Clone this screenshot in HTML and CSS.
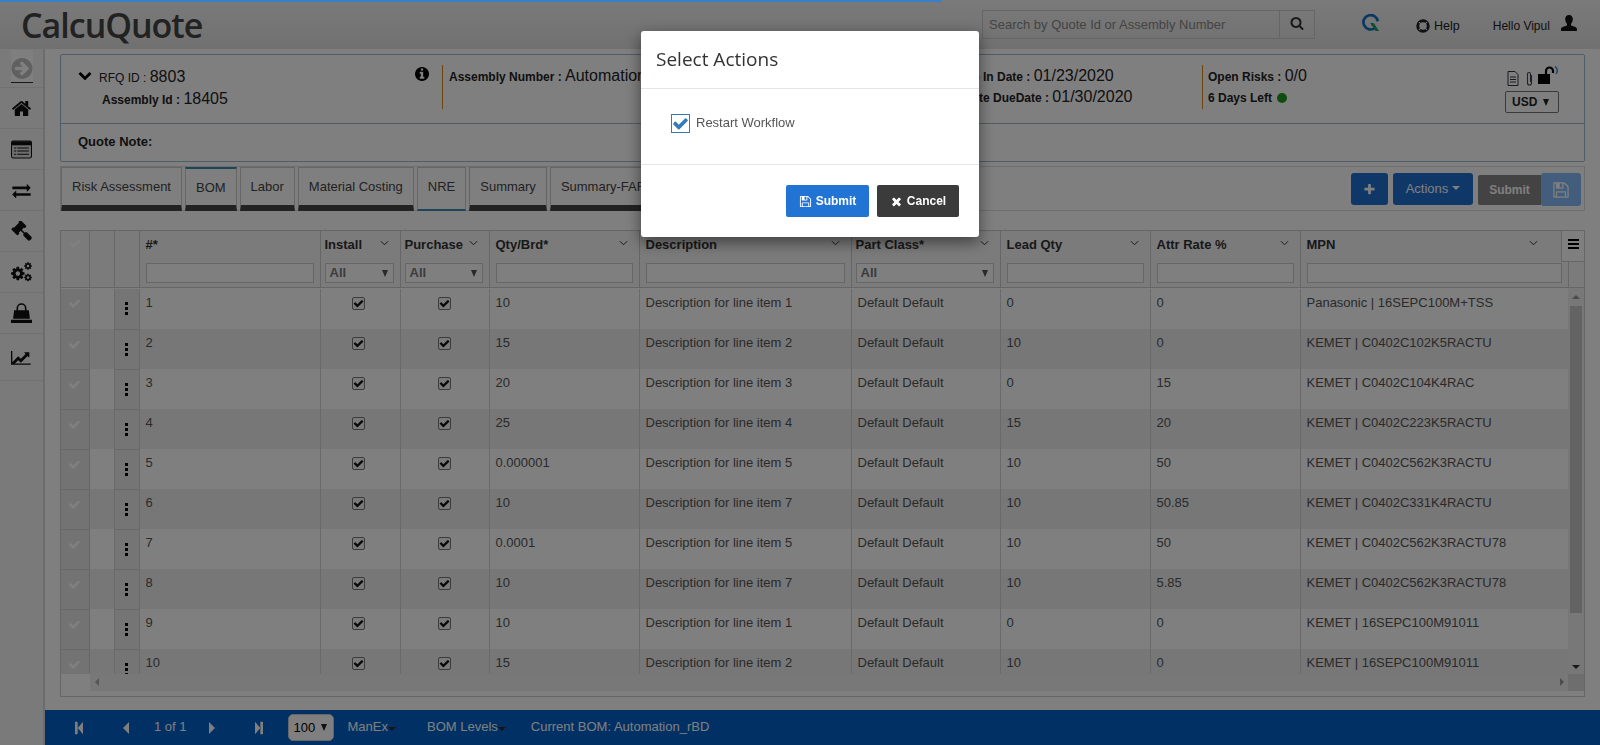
FILE: index.html
```html
<!DOCTYPE html>
<html>
<head>
    <title>CalcuQuote</title>
    <link rel="stylesheet" href="styles.css">
</head>
<body>
    <svg class="sprites" xmlns="http://www.w3.org/2000/svg">
        <symbol id="i-check" viewBox="0 0 1792 1792"><path d="M1671 566q0 40-28 68l-724 724-136 136q-28 28-68 28t-68-28l-136-136-362-362q-28-28-28-68t28-68l136-136q28-28 68-28t68 28l294 295 656-657q28-28 68-28t68 28l136 136q28 28 28 68z"/></symbol>
        <symbol id="i-times" viewBox="0 0 1792 1792"><path d="M1490 1322q0 40-28 68l-136 136q-28 28-68 28t-68-28l-294-294-294 294q-28 28-68 28t-68-28l-136-136q-28-28-28-68t28-68l294-294-294-294q-28-28-28-68t28-68l136-136q28-28 68-28t68 28l294 294 294-294q28-28 68-28t68 28l136 136q28 28 28 68t-28 68l-294 294 294 294q28 28 28 68z"/></symbol>
        <symbol id="i-save" viewBox="0 0 1792 1792"><path d="M512 1536h768v-384h-768v384zm896 0h128v-896q0-14-10-38.5t-20-34.5l-281-281q-10-10-34-20t-39-10v416q0 40-28 68t-68 28h-576q-40 0-68-28t-28-68v-416h-128v1280h128v-416q0-40 28-68t68-28h832q40 0 68 28t28 68v416zm-384-928v-320q0-13-9.5-22.5t-22.5-9.5h-192q-13 0-22.5 9.5t-9.5 22.5v320q0 13 9.5 22.5t22.5 9.5h192q13 0 22.5-9.5t9.5-22.5zm640 32v928q0 40-28 68t-68 28h-1344q-40 0-68-28t-28-68v-1344q0-40 28-68t68-28h928q40 0 88 20t76 48l280 280q28 28 48 76t20 88z"/></symbol>
        <symbol id="i-cog" viewBox="0 0 1792 1792"><path d="M1152 896q0-106-75-181t-181-75-181 75-75 181 75 181 181 75 181-75 75-181zm512-109v222q0 12-8 23t-20 13l-185 28q-19 54-39 91 35 50 107 138 10 12 10 25t-9 23q-27 37-99 108t-94 71q-12 0-26-9l-138-108q-44 23-91 38-16 136-29 186-7 28-36 28h-222q-14 0-24.5-8.5t-11.5-21.5l-28-184q-49-16-90-37l-141 107q-10 9-25 9-14 0-25-11-126-114-165-168-7-10-7-23 0-12 8-23 15-21 51-66.5t54-70.5q-27-50-41-99l-183-27q-13-2-21-12.5t-8-23.5v-222q0-12 8-23t19-13l186-28q14-46 39-92-40-57-107-138-10-12-10-24 0-10 9-23 26-36 98.5-107.5t94.5-71.5q13 0 26 10l138 107q44-23 91-38 16-136 29-186 7-28 36-28h222q14 0 24.5 8.5t11.5 21.5l28 184q49 16 90 37l142-107q9-9 24-9 13 0 25 10 129 119 165 170 7 8 7 22 0 12-8 23-15 21-51 66.5t-54 70.5q26 50 41 98l183 28q13 2 21 12.5t8 23.5z"/></symbol>
        <symbol id="i-angle" viewBox="0 0 10 6"><path d="M1 1l4 4 4-4" fill="none" stroke="currentColor" stroke-width="1.1"/></symbol>
        <symbol id="i-dots" viewBox="0 0 3 13"><rect width="3" height="3"/><rect y="5" width="3" height="3"/><rect y="10" width="3" height="3"/></symbol>
    </svg>

    <div class="pace-bar"></div>

    <header class="topbar">
        <div class="logo">CalcuQuote</div>
        <div class="search">
            <input type="text" placeholder="Search by Quote Id or Assembly Number">
            <button class="search-btn"><svg class="ico-14" viewBox="0 0 1792 1792"><path d="M1216 832q0-185-131.5-316.5t-316.5-131.5-316.5 131.5-131.5 316.5 131.5 316.5 316.5 131.5 316.5-131.5 131.5-316.5zm512 832q0 52-38 90t-90 38q-54 0-90-38l-343-342q-179 124-399 124-143 0-273.5-55.5t-225-150-150-225-55.5-273.5 55.5-273.5 150-225 225-150 273.5-55.5 273.5 55.5 225 150 150 225 55.5 273.5q0 220-124 399l343 343q37 37 37 90z"/></svg></button>
        </div>
        <svg class="q-logo" viewBox="0 0 20 20"><path d="M14.5 15.5A8 8 0 1 1 17.5 8" fill="none" stroke="#1670c4" stroke-width="3"/><path d="M9 10h4l6 9h-4z" fill="#1f9a7a"/></svg>
        <a class="help"><svg viewBox="0 0 16 16"><circle cx="8" cy="8" r="6" fill="none" stroke="#222" stroke-width="3.4"/><path d="M3.500 3.500l3 3M12.500 3.500l-3 3M3.500 12.500l3-3M12.500 12.500l-3-3" stroke="#eee" stroke-width="1.300"/></svg>Help</a>
        <span class="hello">Hello Vipul</span>
        <svg class="user" viewBox="0 0 16 16"><path d="M8 0c2.600 0 3.800 2 3.800 4.200 0 1.800-.8 3.600-1.800 4.600v1.600c2.400 1 6 1.400 6 3.400V16H0v-2.200c0-2 3.600-2.400 6-3.400V8.800C5 7.800 4.200 6 4.200 4.200 4.200 2 5.400 0 8 0z"/></svg>
    </header>

    <div class="main">
        <nav class="sidebar">
            <div class="side-first">
                <svg class="side-arrow" viewBox="0 128 1536 1536"><path d="M1285 896q0-27-18-45l-91-91-362-362q-18-18-45-18t-45 18l-91 91q-18 18-18 45t18 45l189 189h-502q-26 0-45 19t-19 45v128q0 26 19 45t45 19h502l-189 189q-19 19-19 45t19 45l91 91q18 18 45 18t45-18l362-362 91-91q18-18 18-45zm251 0q0 209-103 385.500t-279.500 279.500-385.500 103-385.500-103-279.500-279.500-103-385.500 103-385.500 279.500-279.500 385.500-103 385.500 103 279.500 279.500 103 385.500z"/></svg>
            </div>
            <div class="side-item"><svg class="side-ico" viewBox="0 0 1792 1792"><path d="M1472 992v480q0 26-19 45t-45 19h-384v-384h-256v384h-384q-26 0-45-19t-19-45v-480q0-1 .5-3t.5-3l575-474 575 474q1 2 1 6zm223-69l-62 74q-8 9-21 11h-3q-13 0-21-7l-692-577-692 577q-12 8-24 7-13-2-21-11l-62-74q-8-10-7-23.5t11-21.5l719-599q32-26 76-26t76 26l244 204v-195q0-14 9-23t23-9h192q14 0 23 9t9 23v408l219 182q10 8 11 21.5t-7 23.5z"/></svg></div>
            <div class="side-item"><svg class="side-ico" viewBox="0 0 20 17"><rect x=".5" y=".5" width="19" height="16" rx="1.500" fill="#ddd" stroke="#111"/><rect x="1" y="1" width="18" height="3.500" fill="#111"/><path d="M3 7h2M6 7h11M3 10h2M6 10h11M3 13h2M6 13h11" stroke="#111"/></svg></div>
            <div class="side-item"><svg class="side-ico" viewBox="0 0 2048 1792"><path transform="translate(128 0)" d="M1792 1184v192q0 13-9.500 22.500t-22.500 9.500h-1376v192q0 13-9.500 22.500t-22.500 9.500q-12 0-24-10l-319-320q-9-9-9-22 0-14 9-23l320-320q9-9 23-9 13 0 22.500 9.500t9.500 22.500v192h1376q13 0 22.500 9.500t9.500 22.500zm0-544q0 14-9 23l-320 320q-9 9-23 9-13 0-22.500-9.500t-9.500-22.500v-192h-1376q-13 0-22.500-9.500t-9.500-22.500v-192q0-13 9.500-22.500t22.500-9.500h1376v-192q0-14 9-23t23-9q12 0 24 10l319 319q9 9 9 23z"/></svg></div>
            <div class="side-item"><svg class="side-ico" viewBox="0 0 1792 1792"><path d="M1771 1440q0 53-37 90l-107 108q-39 37-91 37-53 0-90-37l-363-364q-38-36-38-90 0-53 43-96l-256-256-126 126q-14 14-34 14t-34-14q2 2 12.500 12t12.500 13 10 11.500 10 13.500 6 13.500 5.500 16.500 1.500 18q0 38-28 68-3 3-16.500 18t-19 20.500-18.500 16.500-22 15.500-22 9-26 4.500q-40 0-68-28l-408-408q-28-28-28-68 0-13 4.500-26t9-22 15.500-22 16.500-18.500 20.500-19 18-16.500q30-28 68-28 10 0 18 1.500t16.500 5.500 13.500 6 13.500 10 11.500 10 13 12.500 12 12.500q-14-14-14-34t14-34l348-348q14-14 34-14t34 14q-2-2-12.500-12t-12.500-13-10-11.500-10-13.500-6-13.500-5.500-16.500-1.500-18q0-38 28-68 3-3 16.500-18t19-20.500 18.500-16.500 22-15.500 22-9 26-4.500q40 0 68 28l408 408q28 28 28 68 0 13-4.500 26t-9 22-15.500 22-16.500 18.500-20.500 19-18 16.500q-30 28-68 28-10 0-18-1.500t-16.500-5.500-13.500-6-13.500-10-11.500-10-13-12.500-12-12.500q14 14 14 34t-14 34l-126 126 256 256q43-43 96-43 52 0 91 37l363 363q37 39 37 91z"/></svg></div>
            <div class="side-item"><svg class="side-ico side-cogs" viewBox="0 0 22 20"><use href="#i-cog" x="0" y="4" width="15" height="15"/><use href="#i-cog" x="13" y="0" width="8.500" height="8.500"/><use href="#i-cog" x="13" y="11" width="8.500" height="8.500"/></svg></div>
            <div class="side-item"><svg class="side-ico" viewBox="0 0 20 20"><path d="M6 8V5a4 4 0 0 1 8 0v3" fill="none" stroke="#111" stroke-width="1.500"/><path d="M3 7h14l1 8H2zM0 16h20v3H0z"/></svg></div>
            <div class="side-item side-chart"><svg class="side-ico" viewBox="0 0 2048 1792"><path d="M1920 1472v128h-1920v-1344h128v1216h1792zm-128-1056v435q0 21-19.500 29.500t-35.500-7.500l-121-121-633 633q-10 10-23 10t-23-10l-233-233-416 416-192-192 585-585q10-10 23-10t23 10l233 233 464-464-121-121q-16-16-7.500-35.500t29.500-19.500h435q14 0 23 9t9 23z"/></svg></div>
        </nav>

        <div class="content">
            <div class="content-body">
                <section class="info-panel">
                    <div class="info-top">
                        <div class="info-rfq">
                            <svg class="chevron" viewBox="0 0 1792 1792"><path d="M1683 808l-742 741q-19 19-45 19t-45-19l-742-741q-19-19-19-45.500t19-45.500l166-165q19-19 45-19t45 19l531 531 531-531q19-19 45-19t45 19l166 165q19 19 19 45.500t-19 45.500z"/></svg>
                            <div class="rfq-lines">
                                <div class="line rfq-line"><b>RFQ ID :</b> <span class="val">8803</span></div>
                                <div class="line asm-line"><b>Assembly Id :</b> <span class="val">18405</span></div>
                            </div>
                            <svg class="info-ico" viewBox="128 128 1536 1536"><path d="M1152 1376v-160q0-14-9-23t-23-9h-96v-512q0-14-9-23t-23-9h-320q-14 0-23 9t-9 23v160q0 14 9 23t23 9h96v320h-96q-14 0-23 9t-9 23v160q0 14 9 23t23 9h448q14 0 23-9t9-23zm-128-896v-160q0-14-9-23t-23-9h-192q-14 0-23 9t-9 23v160q0 14 9 23t23 9h192q14 0 23-9t9-23zm640 416q0 209-103 385.500t-279.500 279.500-385.500 103-385.500-103-279.500-279.500-103-385.500 103-385.500 279.500-279.500 385.500-103 385.500 103 279.500 279.500 103 385.500z"/></svg>
                        </div>
                        <div class="info-asm">
                            <div class="line"><b>Assembly Number :</b> <span class="val">Automation_rBD</span></div>
                        </div>
                        <div class="info-dates">
                            <div class="line date-in"><b>Quote In Date :</b> <span class="val">01/23/2020</span></div>
                            <div class="line date-due"><b>Quote DueDate :</b> <span class="val">01/30/2020</span></div>
                        </div>
                        <div class="info-risk">
                            <div class="line"><b>Open Risks :</b> <span class="val">0/0</span></div>
                            <div class="line"><b>6 Days Left</b> <i class="dot"></i></div>
                        </div>
                        <div class="info-tools">
                            <div class="tool-icons">
                                <svg class="doc" viewBox="0 0 12 15"><path d="M1 .5h7l3 3v11H1z" fill="none" stroke="#334" /><path d="M3 6h6M3 8.500h6M3 11h6" stroke="#334"/></svg>
                                <svg class="clip" viewBox="0 0 7 15"><path d="M5.500 4v8a2 2 0 0 1-4 0V3a1.500 1.500 0 0 1 3 0v8" fill="none" stroke="#445" stroke-width="1.100"/></svg>
                                <svg class="lock" viewBox="0 0 22 19"><rect y="8" width="12" height="10"/><path d="M8 8V5a3.500 3.500 0 0 1 7 0v2" fill="none" stroke="#000" stroke-width="2.200"/><path d="M17 .5a5 5 0 0 1 1 7.500" fill="none" stroke="#3b8fd9" stroke-width="1.500"/></svg>
                            </div>
                            <div class="usd">USD <span class="tri"></span></div>
                        </div>
                    </div>
                    <div class="info-note"><b>Quote Note:</b></div>
                </section>

                <section class="tabs">
                    <a class="tab">Risk Assessment</a>
                    <a class="tab tab-bom">BOM</a>
                    <a class="tab">Labor</a>
                    <a class="tab">Material Costing</a>
                    <a class="tab tab-nre">NRE</a>
                    <a class="tab">Summary</a>
                    <a class="tab">Summary-FAR</a>
                    <div class="tab-actions">
                        <button class="btn btn-blue btn-plus"><svg class="ico-13" viewBox="0 0 1792 1792"><path d="M1600 736v192q0 40-28 68t-68 28h-416v416q0 40-28 68t-68 28h-192q-40 0-68-28t-28-68v-416h-416q-40 0-68-28t-28-68v-192q0-40 28-68t68-28h416v-416q0-40 28-68t68-28h192q40 0 68 28t28 68v416h416q40 0 68 28t28 68z"/></svg></button>
                        <button class="btn btn-blue btn-actions">Actions <span class="caret"></span></button>
                        <button class="btn btn-gray">Submit</button>
                        <button class="btn btn-save"><svg class="ico-18"><use href="#i-save"/></svg></button>
                    </div>
                </section>

                <section class="grid">
                    <div class="grid-menu"><span></span><span></span><span></span></div>
                    <div class="grid-head-wrap">
                        <table class="grid-head">
                            <colgroup><col class="c1"><col class="c2"><col class="c3"><col class="c4"><col class="c5"><col class="c6"><col class="c7"><col class="c8"><col class="c9"><col class="c10"><col class="c11"><col class="c12"></colgroup>
                            <tr>
                                <th class="sel"><svg class="tick"><use href="#i-check"/></svg></th>
                                <th></th>
                                <th></th>
                                <th><div class="th-title">#*</div><input type="text"></th>
                                <th class="th-tight"><div class="th-title">Install<svg class="angle"><use href="#i-angle"/></svg></div><div class="fsel">All<span class="tri"></span></div></th>
                                <th class="th-tight"><div class="th-title">Purchase<svg class="angle"><use href="#i-angle"/></svg></div><div class="fsel">All<span class="tri"></span></div></th>
                                <th><div class="th-title">Qty/Brd*<svg class="angle"><use href="#i-angle"/></svg></div><input type="text"></th>
                                <th><div class="th-title">Description<svg class="angle"><use href="#i-angle"/></svg></div><input type="text"></th>
                                <th class="th-tight"><div class="th-title">Part Class*<svg class="angle"><use href="#i-angle"/></svg></div><div class="fsel">All<span class="tri"></span></div></th>
                                <th><div class="th-title">Lead Qty<svg class="angle"><use href="#i-angle"/></svg></div><input type="text"></th>
                                <th><div class="th-title">Attr Rate %<svg class="angle"><use href="#i-angle"/></svg></div><input type="text"></th>
                                <th class="th-mpn"><div class="th-title">MPN<svg class="angle"><use href="#i-angle"/></svg></div><input type="text"></th>
                            </tr>
                        </table>
                    </div>
                    <div class="grid-body">
                        <div class="grid-rows">
                            <table class="rows">
                                <colgroup><col class="c1"><col class="c2"><col class="c3"><col class="c4"><col class="c5"><col class="c6"><col class="c7"><col class="c8"><col class="c9"><col class="c10"><col class="c11"><col class="c12"></colgroup>
                                <tr><td class="sel"><svg class="tick"><use href="#i-check"/></svg></td><td></td><td class="menu"><svg class="dots"><use href="#i-dots"/></svg></td><td>1</td><td class="ctr"><span class="cb"><svg><use href="#i-check"/></svg></span></td><td class="ctr"><span class="cb"><svg><use href="#i-check"/></svg></span></td><td>10</td><td>Description for line item 1</td><td>Default Default</td><td>0</td><td>0</td><td>Panasonic | 16SEPC100M+TSS</td></tr>
                                <tr><td class="sel"><svg class="tick"><use href="#i-check"/></svg></td><td></td><td class="menu"><svg class="dots"><use href="#i-dots"/></svg></td><td>2</td><td class="ctr"><span class="cb"><svg><use href="#i-check"/></svg></span></td><td class="ctr"><span class="cb"><svg><use href="#i-check"/></svg></span></td><td>15</td><td>Description for line item 2</td><td>Default Default</td><td>10</td><td>0</td><td>KEMET | C0402C102K5RACTU</td></tr>
                                <tr><td class="sel"><svg class="tick"><use href="#i-check"/></svg></td><td></td><td class="menu"><svg class="dots"><use href="#i-dots"/></svg></td><td>3</td><td class="ctr"><span class="cb"><svg><use href="#i-check"/></svg></span></td><td class="ctr"><span class="cb"><svg><use href="#i-check"/></svg></span></td><td>20</td><td>Description for line item 3</td><td>Default Default</td><td>0</td><td>15</td><td>KEMET | C0402C104K4RAC</td></tr>
                                <tr><td class="sel"><svg class="tick"><use href="#i-check"/></svg></td><td></td><td class="menu"><svg class="dots"><use href="#i-dots"/></svg></td><td>4</td><td class="ctr"><span class="cb"><svg><use href="#i-check"/></svg></span></td><td class="ctr"><span class="cb"><svg><use href="#i-check"/></svg></span></td><td>25</td><td>Description for line item 4</td><td>Default Default</td><td>15</td><td>20</td><td>KEMET | C0402C223K5RACTU</td></tr>
                                <tr><td class="sel"><svg class="tick"><use href="#i-check"/></svg></td><td></td><td class="menu"><svg class="dots"><use href="#i-dots"/></svg></td><td>5</td><td class="ctr"><span class="cb"><svg><use href="#i-check"/></svg></span></td><td class="ctr"><span class="cb"><svg><use href="#i-check"/></svg></span></td><td>0.000001</td><td>Description for line item 5</td><td>Default Default</td><td>10</td><td>50</td><td>KEMET | C0402C562K3RACTU</td></tr>
                                <tr><td class="sel"><svg class="tick"><use href="#i-check"/></svg></td><td></td><td class="menu"><svg class="dots"><use href="#i-dots"/></svg></td><td>6</td><td class="ctr"><span class="cb"><svg><use href="#i-check"/></svg></span></td><td class="ctr"><span class="cb"><svg><use href="#i-check"/></svg></span></td><td>10</td><td>Description for line item 7</td><td>Default Default</td><td>10</td><td>50.85</td><td>KEMET | C0402C331K4RACTU</td></tr>
                                <tr><td class="sel"><svg class="tick"><use href="#i-check"/></svg></td><td></td><td class="menu"><svg class="dots"><use href="#i-dots"/></svg></td><td>7</td><td class="ctr"><span class="cb"><svg><use href="#i-check"/></svg></span></td><td class="ctr"><span class="cb"><svg><use href="#i-check"/></svg></span></td><td>0.0001</td><td>Description for line item 5</td><td>Default Default</td><td>10</td><td>50</td><td>KEMET | C0402C562K3RACTU78</td></tr>
                                <tr><td class="sel"><svg class="tick"><use href="#i-check"/></svg></td><td></td><td class="menu"><svg class="dots"><use href="#i-dots"/></svg></td><td>8</td><td class="ctr"><span class="cb"><svg><use href="#i-check"/></svg></span></td><td class="ctr"><span class="cb"><svg><use href="#i-check"/></svg></span></td><td>10</td><td>Description for line item 7</td><td>Default Default</td><td>10</td><td>5.85</td><td>KEMET | C0402C562K3RACTU78</td></tr>
                                <tr><td class="sel"><svg class="tick"><use href="#i-check"/></svg></td><td></td><td class="menu"><svg class="dots"><use href="#i-dots"/></svg></td><td>9</td><td class="ctr"><span class="cb"><svg><use href="#i-check"/></svg></span></td><td class="ctr"><span class="cb"><svg><use href="#i-check"/></svg></span></td><td>10</td><td>Description for line item 1</td><td>Default Default</td><td>0</td><td>0</td><td>KEMET | 16SEPC100M91011</td></tr>
                                <tr><td class="sel"><svg class="tick"><use href="#i-check"/></svg></td><td></td><td class="menu"><svg class="dots"><use href="#i-dots"/></svg></td><td>10</td><td class="ctr"><span class="cb"><svg><use href="#i-check"/></svg></span></td><td class="ctr"><span class="cb"><svg><use href="#i-check"/></svg></span></td><td>15</td><td>Description for line item 2</td><td>Default Default</td><td>10</td><td>0</td><td>KEMET | 16SEPC100M91011</td></tr>
                            </table>
                        </div>
                        <div class="vscroll">
                            <span class="arr arr-up"></span>
                            <div class="vthumb"></div>
                            <span class="arr arr-down"></span>
                        </div>
                    </div>
                    <div class="hscroll">
                        <div class="hscroll-pin"></div>
                        <div class="hscroll-track"><span class="arr arr-left"></span><span class="arr arr-right"></span></div>
                        <div class="hscroll-corner"></div>
                    </div>
                </section>
            </div>

            <footer class="pager">
                <svg class="pg pg-first" viewBox="0 0 9 14"><rect width="3" height="14"/><path d="M9 0v14L3 7z"/></svg>
                <svg class="pg pg-prev" viewBox="0 0 7 14"><path d="M7 0v14L0 7z"/></svg>
                <span class="pg-count">1 of 1</span>
                <svg class="pg pg-next" viewBox="0 0 7 14"><path d="M0 0v14l7-7z"/></svg>
                <svg class="pg pg-last" viewBox="0 0 9 14"><rect x="6" width="3" height="14"/><path d="M0 0v14l6-7z"/></svg>
                <div class="pg-size">100 <span class="tri"></span></div>
                <span class="pg-link pg-manex">ManEx<span class="caret"></span></span>
                <span class="pg-link pg-levels">BOM Levels<span class="caret"></span></span>
                <span class="pg-link">Current BOM: Automation_rBD</span>
            </footer>
        </div>
    </div>

    <div class="backdrop">
        <div class="modal">
            <div class="modal-head">Select Actions</div>
            <div class="modal-body">
                <span class="big-check"><svg><use href="#i-check"/></svg></span>
                <label>Restart Workflow</label>
            </div>
            <div class="modal-foot">
                <button class="mbtn mbtn-submit"><svg><use href="#i-save"/></svg>Submit</button>
                <button class="mbtn mbtn-cancel"><svg><use href="#i-times"/></svg>Cancel</button>
            </div>
        </div>
    </div>
</body>
</html>
```

FILE: styles.css
```css
* {
    box-sizing: border-box;
}
html, body {
    height: 100%;
}
body {
    margin: 0;
    height: 745px;
    overflow: hidden;
    font-family: "Liberation Sans", Arial, sans-serif;
    font-size: 12px;
    color: #222;
    background-color: #fff;
}
.sprites {
    display: none;
}
button, input {
    font-family: inherit;
}
.ico-13 { width: 13px; height: 13px; fill: currentColor; }
.ico-14 { width: 14px; height: 14px; fill: currentColor; }
.ico-18 { width: 18px; height: 18px; fill: currentColor; }

.pace-bar {
    position: fixed;
    top: 0;
    left: 0;
    width: 941px;
    height: 2px;
    background-color: #3a80c6;
    z-index: 20;
}

/* top bar */
.topbar {
    height: 49px;
    display: flex;
    align-items: center;
    background: linear-gradient(#f4f4f4, #e2e2e2);
}
.logo {
    margin-left: 21px;
    width: 961px;
    font-family: "Open Sans", sans-serif;
    font-size: 34px;
    font-weight: 600;
    color: #444;
    letter-spacing: -1px;
}
.search {
    width: 333px;
    height: 29px;
    display: flex;
    border: 1px solid #ccc;
    margin-top: -1px;
}
.search input {
    flex: 1;
    min-width: 0;
    border: none;
    border-right: 1px solid #ccc;
    padding: 0 6px;
    background: transparent;
    font-size: 13px;
}
.search input::placeholder {
    color: #888;
}
.search-btn {
    width: 34px;
    border: none;
    background: transparent;
    color: #333;
    padding: 0;
}
.q-logo {
    width: 18px;
    height: 18px;
    margin: -3px 0 0 47px;
}
.help {
    display: flex;
    align-items: center;
    gap: 4px;
    margin: 3px 0 0 36px;
    font-size: 12.5px;
}
.help svg {
    width: 14px;
    height: 14px;
}
.hello {
    margin: 3px 0 0 33px;
    font-size: 12px;
}
.user {
    width: 16px;
    height: 16px;
    margin: -3px 0 0 11px;
    fill: #111;
}

/* sidebar */
.main {
    height: 696px;
    display: flex;
}
.sidebar {
    width: 45px;
    flex: none;
    border-right: 2px solid #d8d8d8;
    background-color: #f4f4f4;
}
.side-first {
    height: 39px;
    padding: 1px 0 0 11px;
    border-bottom: 1px solid #e2e2e2;
}
.side-arrow {
    display: block;
    width: 22px;
    height: 33px;
    padding: 8px 0 3px;
    background-color: #fff;
    fill: #c0c0c0;
    border-bottom: 1px solid #333;
}
.side-item {
    height: 41px;
    display: flex;
    align-items: center;
    justify-content: center;
    border-bottom: 1px solid #e2e2e2;
}
.side-ico {
    width: 21px;
    height: 21px;
    margin-left: -1px;
    fill: #111;
}
.side-cogs {
    width: 23px;
    height: 22px;
}
.side-chart {
    height: 47px;
}

/* content */
.content {
    flex: 1;
    min-width: 0;
    display: flex;
    flex-direction: column;
}
.content-body {
    height: 661px;
    padding: 5px 15px 0;
}

.info-panel {
    height: 108px;
    border: 1px solid #9fbad2;
    border-radius: 2px;
    margin-bottom: 4px;
}
.info-top {
    height: 69px;
    display: flex;
    border-bottom: 1px solid #9fbad2;
    padding-top: 10px;
}
.line {
    height: 22px;
    line-height: 22px;
    white-space: nowrap;
}
.line b {
    font-size: 12px;
}
.val {
    font-size: 16px;
    font-weight: normal;
}
.info-rfq {
    width: 382px;
    height: 44px;
    flex: none;
    display: flex;
    border-right: 1px solid #d98a1f;
    padding-left: 17px;
}
.chevron {
    width: 14px;
    height: 14px;
    flex: none;
    margin-top: 3px;
    fill: #000;
}
.rfq-lines {
    margin-left: 7px;
}
.rfq-line {
    padding-top: 1px;
}
.rfq-line b {
    font-weight: normal;
}
.asm-line {
    margin: 1px 0 0 3px;
}
.info-ico {
    width: 14px;
    height: 14px;
    flex: none;
    margin: 2px 13px 0 auto;
    fill: #000;
}
.info-asm {
    width: 507px;
    flex: none;
    padding-left: 6px;
}
.info-dates {
    width: 253px;
    height: 44px;
    flex: none;
    border-right: 1px solid #d98a1f;
}
.date-in {
    margin-left: -5px;
}
.date-due {
    margin: -1px 0 0 5px;
}
.info-risk {
    width: 302px;
    flex: none;
    padding-left: 5px;
}
.dot {
    display: inline-block;
    width: 10px;
    height: 10px;
    border-radius: 50%;
    background-color: #1f9a1f;
    vertical-align: -1px;
    margin-left: 2px;
}
.tool-icons {
    display: flex;
    align-items: flex-end;
    height: 23px;
    margin-top: -2px;
}
.doc { width: 12px; height: 15px; margin-left: 2px; }
.clip { width: 7px; height: 15px; margin-left: 7px; }
.lock { width: 22px; height: 19px; margin-left: 5px; margin-bottom: 1px; }
.usd {
    width: 54px;
    height: 22px;
    line-height: 20px;
    margin-top: 5px;
    padding-left: 6px;
    border: 1px solid #777;
    border-radius: 2px;
    font-weight: bold;
    font-size: 12px;
    background-color: #fff;
    position: relative;
}
.tri {
    position: absolute;
    right: 9px;
    top: 7px;
    width: 0;
    height: 0;
    border-left: 3.5px solid transparent;
    border-right: 3.5px solid transparent;
    border-top: 7px solid #222;
}
.info-note {
    height: 37px;
    line-height: 35px;
    padding-left: 17px;
    font-size: 13px;
}

.tabs {
    height: 45px;
    display: flex;
    border: 1px solid #ddd;
}
.tab {
    height: 44px;
    padding: 0 10px;
    margin-right: 3px;
    line-height: 38px;
    font-size: 13px;
    color: #444;
    white-space: nowrap;
    border-left: 1px solid #ccc;
    border-right: 1px solid #ccc;
    border-top: 1px solid #ccc;
    border-bottom: 6px solid #444;
}
.tab-bom {
    border-top: 2px solid #3f8ab0;
}
.tab-nre {
    border-bottom: 2px solid #3f8ab0;
}
.tab:nth-child(7) {
    width: 120px;
}
.tab-actions {
    margin-left: auto;
    display: flex;
    align-items: flex-start;
    padding: 6px 3px 0 0;
}
.btn {
    height: 32px;
    border: none;
    border-radius: 3px;
    padding: 0;
    color: #fff;
    font-size: 13px;
    display: flex;
    align-items: center;
    justify-content: center;
}
.btn-blue {
    background-color: #1e70d2;
}
.btn-plus {
    width: 37px;
    margin-right: 5px;
}
.btn-actions {
    width: 80px;
    margin-right: 5px;
    padding-bottom: 2px;
    gap: 4px;
}
.caret {
    display: inline-block;
    width: 0;
    height: 0;
    border-left: 4px solid transparent;
    border-right: 4px solid transparent;
    border-top: 4px solid currentColor;
}
.btn-gray {
    width: 63px;
    height: 30px;
    margin-top: 2px;
    background-color: #878787;
    border-radius: 2px 0 0 2px;
    font-size: 12px;
    font-weight: bold;
}
.btn-save {
    width: 40px;
    height: 33px;
    background-color: #84bdf8;
}

/* grid */
.grid {
    height: 467px;
    margin-top: 19px;
    border: 1px solid #ccc;
    position: relative;
    display: flex;
    flex-direction: column;
}
.c1 { width: 28px; }
.c2 { width: 25px; }
.c3 { width: 25px; }
.c4 { width: 181px; }
.c5 { width: 80px; }
.c6 { width: 89px; }
.c7 { width: 150px; }
.c8 { width: 212px; }
.c9 { width: 149px; }
.c10 { width: 150px; }
.c11 { width: 150px; }
.c12 { width: 268px; }
table {
    border-collapse: collapse;
    table-layout: fixed;
    width: 1507px;
}
.grid-head-wrap {
    height: 57px;
    flex: none;
    border-bottom: 1px solid #ccc;
    background-color: #f6f6f6;
}
.grid-head th {
    padding: 0 6px;
    height: 56px;
    vertical-align: top;
    text-align: left;
    font-size: 13px;
    border-right: 1px solid #ccc;
    color: #333;
}
.grid-head th.th-tight {
    padding-left: 4px;
}
.grid-head th.sel {
    text-align: center;
}
.th-title {
    height: 32px;
    line-height: 27px;
    position: relative;
    white-space: nowrap;
}
.angle {
    position: absolute;
    right: 5px;
    top: 9px;
    width: 9px;
    height: 6px;
    color: #333;
}
.th-mpn .angle {
    right: 24px;
}
.grid-head input {
    display: block;
    width: 100%;
    height: 20px;
    border: 1px solid #ccc;
    background-color: #fff;
}
.fsel {
    height: 20px;
    line-height: 18px;
    border: 1px solid #ccc;
    padding-left: 4px;
    color: #777;
    position: relative;
    background-color: #fff;
}
.fsel .tri {
    right: 5px;
    top: 6px;
    border-top-color: #555;
}
.tick {
    width: 13px;
    height: 13px;
    fill: #fff;
    display: block;
    margin: 6px auto 0;
}
.grid-menu {
    position: absolute;
    right: 0;
    top: 0;
    width: 23px;
    height: 31px;
    padding-top: 8px;
    border: 1px solid #ccc;
    border-width: 0 0 1px 1px;
    background-color: #fff;
}
.grid-menu span {
    display: block;
    width: 11px;
    height: 2px;
    margin: 0 auto 2px;
    background-color: #000;
}
.grid-body {
    height: 386px;
    display: flex;
    flex: none;
}
.grid-rows {
    width: 1507px;
    padding-top: 1px;
    overflow: hidden;
}
.rows td {
    height: 40px;
    padding: 0 6px;
    vertical-align: top;
    line-height: 28px;
    font-size: 13px;
    color: #555;
    border-right: 1px solid #d4d4d4;
    white-space: nowrap;
    overflow: hidden;
}
.rows tr:nth-child(even) td {
    background-color: #efefef;
}
.rows tr td.sel {
    background-color: #e6e6e6;
    border-right-color: #ccc;
    border-bottom: 1px solid #d0d0d0;
}
.rows tr td.menu {
    background-color: #ebebeb;
    border-bottom: 1px solid #d0d0d0;
    text-align: center;
    padding: 0;
}
.rows td.sel .tick {
    margin: 8px auto 0;
}
.dots {
    display: block;
    width: 3px;
    height: 13px;
    margin: 13px auto 0;
    fill: #000;
}
.rows td.ctr {
    text-align: center;
}
.rows td.ctr:nth-child(5) {
    padding-right: 10px;
}
.cb {
    display: inline-block;
    width: 13px;
    height: 13px;
    margin-top: 8px;
    border: 1px solid #777;
    border-radius: 2px;
    background-color: #f4f4f4;
    vertical-align: top;
}
.cb svg {
    display: block;
    width: 11px;
    height: 11px;
    fill: #111;
}
.vscroll {
    width: 16px;
    flex: none;
    background-color: #f1f1f1;
    position: relative;
    padding: 18px 2px 0;
}
.vthumb {
    height: 307px;
    background-color: #c6c6c6;
}
.arr {
    position: absolute;
    width: 0;
    height: 0;
}
.arr-up {
    top: 7px;
    left: 4px;
    border-left: 4px solid transparent;
    border-right: 4px solid transparent;
    border-bottom: 4px solid #999;
}
.arr-down {
    bottom: 5px;
    left: 4px;
    border-left: 4px solid transparent;
    border-right: 4px solid transparent;
    border-top: 4px solid #333;
}
.hscroll {
    height: 17px;
    display: flex;
}
.hscroll-pin {
    width: 29px;
    background-color: #fff;
}
.hscroll-track {
    flex: 1;
    background-color: #f1f1f1;
    position: relative;
}
.hscroll-corner {
    width: 16px;
    background-color: #dcdcdc;
}
.arr-left {
    left: 5px;
    top: 4px;
    border-top: 4px solid transparent;
    border-bottom: 4px solid transparent;
    border-right: 4px solid #aaa;
}
.arr-right {
    right: 4px;
    top: 4px;
    border-top: 4px solid transparent;
    border-bottom: 4px solid transparent;
    border-left: 4px solid #999;
}

/* footer pager */
.pager {
    height: 35px;
    display: flex;
    align-items: center;
    background-color: #0161c8;
    color: #fff;
    font-size: 13px;
}
.pg {
    height: 14px;
    fill: #fff;
}
.pg-first { width: 8px; margin-left: 30px; }
.pg-prev { width: 6px; margin-left: 40px; }
.pg-count { margin-left: 25px; padding-bottom: 2px; }
.pg-next { width: 6px; margin-left: 22px; }
.pg-last { width: 8px; margin-left: 40px; }
.pg-size {
    width: 46px;
    height: 27px;
    line-height: 26px;
    margin-left: 25px;
    padding-left: 5px;
    border: 1px solid #ccc;
    border-radius: 5px;
    background-color: #fff;
    color: #000;
    position: relative;
    font-size: 13px;
}
.pg-size .tri {
    top: 9px;
    right: 6px;
}
.pg-link {
    white-space: nowrap;
    padding-bottom: 2px;
}
.pg-link .caret {
    color: #2a2a2a;
}
.pg-manex { margin-left: 14px; }
.pg-levels { margin-left: 31px; }
.pg-link:last-child { margin-left: 25px; }

/* modal */
.backdrop {
    position: fixed;
    inset: 0;
    background-color: rgba(0, 0, 0, 0.5);
    z-index: 10;
}
.modal {
    width: 338px;
    height: 206px;
    margin: 31px 0 0 641px;
    background-color: #fff;
    border-radius: 3px;
    box-shadow: 0 5px 15px rgba(0, 0, 0, 0.5);
}
.modal-head {
    height: 58px;
    padding-left: 15px;
    line-height: 57px;
    border-bottom: 1px solid #e5e5e5;
    font-family: "Open Sans", sans-serif;
    font-size: 19px;
    color: #333;
}
.modal-body {
    height: 76px;
    padding: 25px 0 0 30px;
    display: flex;
    align-items: flex-start;
    border-bottom: 1px solid #e5e5e5;
}
.big-check {
    width: 19px;
    height: 19px;
    border: 1px solid #337ab7;
    display: flex;
    align-items: center;
    justify-content: center;
}
.big-check svg {
    width: 17px;
    height: 17px;
    fill: #337ab7;
}
.modal-body label {
    margin-left: 6px;
    line-height: 18px;
    font-size: 13px;
    color: #555;
}
.modal-foot {
    padding: 20px 20px 0 0;
    display: flex;
    justify-content: flex-end;
    gap: 8px;
}
.mbtn {
    height: 32px;
    border: none;
    border-radius: 2px;
    color: #fff;
    font-size: 12px;
    font-weight: bold;
    display: flex;
    align-items: center;
    justify-content: center;
    gap: 4px;
    padding: 0;
}
.mbtn svg {
    width: 13px;
    height: 13px;
    fill: #fff;
}
.mbtn-submit {
    width: 83px;
    background-color: #2174d4;
}
.mbtn-cancel {
    width: 82px;
    background-color: #3b3b3b;
}
```
